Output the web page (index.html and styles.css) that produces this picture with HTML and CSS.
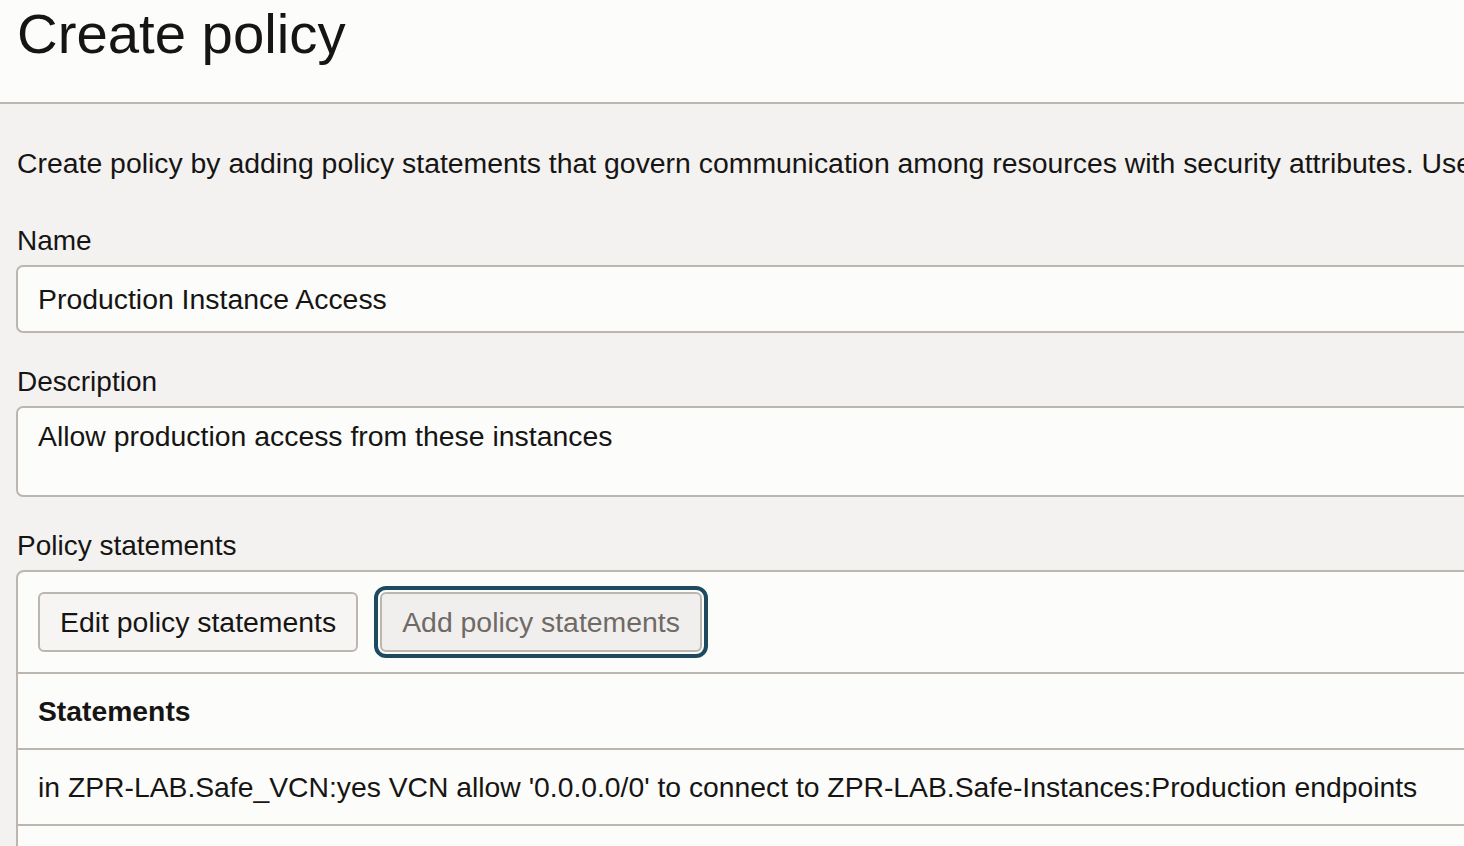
FILE: index.html
```html
<!DOCTYPE html>
<html lang="en">
<head>
<meta charset="utf-8">
<title>Create policy</title>
<link rel="stylesheet" href="styles.css">
</head>
<body>
<header class="page-header">
  <h1 class="page-title">Create policy</h1>
</header>
<main class="page-body">
  <p class="intro">Create policy by adding policy statements that govern communication among resources with security attributes. Use</p>

  <div class="field">
    <label class="field-label">Name</label>
    <div class="text-input">Production Instance Access</div>
  </div>

  <div class="field">
    <label class="field-label">Description</label>
    <div class="text-area">Allow production access from these instances</div>
  </div>

  <div class="field">
    <label class="field-label">Policy statements</label>
    <div class="statements-box">
      <div class="toolbar">
        <button class="btn">Edit policy statements</button>
        <button class="btn btn-active">Add policy statements</button>
      </div>
      <div class="table">
        <div class="table-row table-head">Statements</div>
        <div class="table-row">in ZPR-LAB.Safe_VCN:yes VCN allow '0.0.0.0/0' to connect to ZPR-LAB.Safe-Instances:Production endpoints</div>
        <div class="table-foot"></div>
      </div>
    </div>
  </div>
</main>
</body>
</html>
```

FILE: styles.css
```css
html, body {
  margin: 0;
  padding: 0;
  overflow: hidden;
}

body {
  background: #f3f2f1;
  color: #161513;
  font-family: "Liberation Sans", Arial, Helvetica, sans-serif;
  width: 1900px;
  height: 846px;
}

.page-header {
  background: #fcfcfb;
  height: 100px;
  border-bottom: 2px solid #bcb6b1;
  padding: 2px 0 0 17px;
}

.page-title {
  margin: 0;
  font-size: 56.3px;
  font-weight: 400;
  line-height: 64px;
}

.page-body {
  padding: 43px 0 0 16px;
  display: flex;
  flex-direction: column;
  gap: 33px;
}

.intro {
  margin: 0 0 13px 1px;
  font-size: 28.4px;
  line-height: 32px;
  white-space: nowrap;
}

.field {
  display: flex;
  flex-direction: column;
  gap: 8px;
}

.field-label {
  font-size: 28px;
  line-height: 32px;
  padding-left: 1px;
}

.text-input,
.text-area {
  background: #fcfcfb;
  border: 2px solid #bcb6b1;
  border-radius: 7px;
  font-size: 28.4px;
  line-height: 32px;
  padding: 16px 20px;
  white-space: nowrap;
}

.text-area {
  box-sizing: border-box;
  padding-top: 12px;
  height: 91px;
}

.statements-box {
  background: #fcfcfb;
  border: 2px solid #bcb6b1;
  border-radius: 8px;
}

.toolbar {
  display: flex;
  gap: 22px;
  padding: 20px;
}

.btn {
  font-family: inherit;
  font-size: 28.4px;
  line-height: 32px;
  height: 60px;
  padding: 0 20px;
  background: #f6f5f3;
  color: #161513;
  border: 2px solid #bcb6b1;
  border-radius: 6px;
}

.btn-active {
  background: #f1efed;
  color: #6f6a66;
  outline: 4px solid #1e4a5f;
  outline-offset: 2px;
}

.table-row {
  border-top: 2px solid #bcb6b1;
  padding: 21px 20px;
  font-size: 28.3px;
  line-height: 32px;
  white-space: nowrap;
}

.table-head {
  font-weight: 700;
}

.table-foot {
  border-top: 2px solid #bcb6b1;
  height: 60px;
}
```
